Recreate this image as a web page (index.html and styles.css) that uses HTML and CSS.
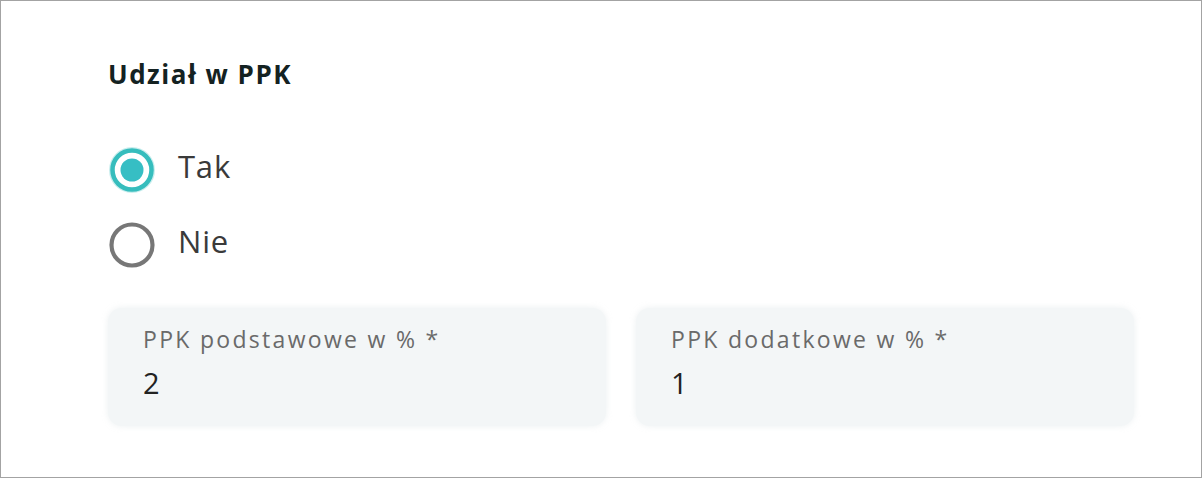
FILE: index.html
```html
<!DOCTYPE html>
<html lang="pl">
<head>
<meta charset="utf-8">
<title>Udział w PPK</title>
<link rel="stylesheet" href="styles.css">
</head>
<body>
<main class="frame">
  <section class="ppk">
    <h2 class="ppk-title">Udział w PPK</h2>
    <div class="radio-group" role="radiogroup">
      <label class="radio-row">
        <span class="radio radio-checked">
          <svg viewBox="0 0 48 48" width="48" height="48" aria-hidden="true">
            <circle cx="24" cy="24" r="22" fill="none" stroke="#c9eeee" stroke-width="2"/>
            <circle cx="24" cy="24" r="19.5" fill="none" stroke="#36bdbd" stroke-width="4.5"/>
            <circle cx="24" cy="24" r="11.5" fill="#36bec4"/>
          </svg>
        </span>
        <span class="radio-label">Tak</span>
      </label>
      <label class="radio-row">
        <span class="radio">
          <svg viewBox="0 0 48 48" width="48" height="48" aria-hidden="true">
            <circle cx="24" cy="24" r="20.5" fill="none" stroke="#777777" stroke-width="4.2"/>
          </svg>
        </span>
        <span class="radio-label">Nie</span>
      </label>
    </div>
    <div class="fields">
      <div class="field">
        <div class="field-label">PPK podstawowe w % *</div>
        <div class="field-value">2</div>
      </div>
      <div class="field">
        <div class="field-label">PPK dodatkowe w % *</div>
        <div class="field-value">1</div>
      </div>
    </div>
  </section>
</main>
</body>
</html>
```
FILE: styles.css
```css
* { box-sizing: border-box; }
html, body { margin: 0; padding: 0; background: #ffffff; }
body { font-family: "Open Sans", "Noto Sans", sans-serif; }

.frame {
  width: 1202px;
  height: 478px;
  border: 1px solid #a3a3a3;
  background: #ffffff;
  padding: 58px 0 0 107px;
}

.ppk { display: flex; flex-direction: column; width: 1026px; }

.ppk-title {
  margin: 0;
  font-size: 26px;
  line-height: 30px;
  font-weight: 700;
  color: #142222;
  letter-spacing: 1.5px;
}

.radio-group {
  display: flex;
  flex-direction: column;
  gap: 27px;
  margin-top: 57px;
}

.radio-row {
  display: flex;
  align-items: center;
  height: 48px;
  gap: 22px;
}

.radio { display: flex; width: 48px; height: 48px; }
.radio svg { display: block; }

.radio-label {
  font-size: 31px;
  line-height: 40px;
  color: #3a3a3a;
  font-weight: 400;
  padding-bottom: 8px;
  letter-spacing: 0.8px;
}

.fields {
  display: flex;
  gap: 30px;
  margin-top: 39px;
}

.field {
  width: 498px;
  height: 118px;
  border-radius: 14px;
  background: #f3f6f7;
  box-shadow: 0 0 6px rgba(200, 212, 214, 0.35);
  padding: 18px 35px 0;
}

.field-label {
  font-size: 23px;
  line-height: 26px;
  color: #6a6a6a;
  letter-spacing: 2.3px;
}

.field-value {
  margin-top: 14px;
  font-size: 29px;
  line-height: 34px;
  color: #222222;
}
```
